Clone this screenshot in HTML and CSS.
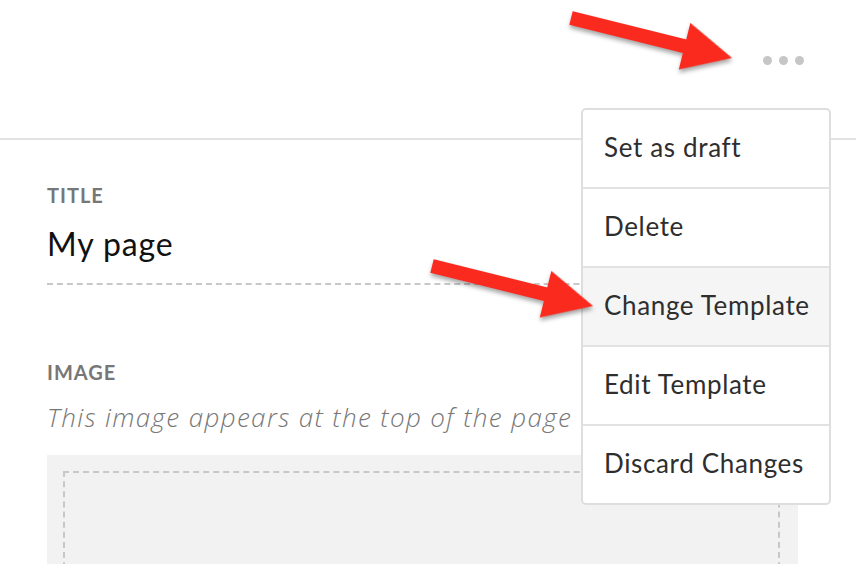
FILE: index.html
```html
<!DOCTYPE html>
<html>
<head>
<meta charset="utf-8">
<link rel="stylesheet" href="styles.css">
</head>
<body>
<div class="page">
  <header class="topbar">
    <div class="more" aria-label="More"><span></span><span></span><span></span></div>
  </header>
  <main class="form">
    <section class="field">
      <div class="label">TITLE</div>
      <div class="title-input">My page</div>
    </section>
    <section class="field image-field">
      <div class="label">IMAGE</div>
      <div class="hint">This image appears at the top of the page</div>
      <div class="dropzone"><div class="dropzone-inner"></div></div>
    </section>
  </main>
  <ul class="menu">
    <li class="menu-item">Set as draft</li>
    <li class="menu-item">Delete</li>
    <li class="menu-item active">Change Template</li>
    <li class="menu-item">Edit Template</li>
    <li class="menu-item">Discard Changes</li>
  </ul>
  <svg class="annotations" width="856" height="564" viewBox="0 0 856 564">
    <g class="arrow" transform="translate(571 18) rotate(13.95)">
      <polygon points="0,-7 117,-7 117,-24 166,0 117,24 117,7 0,7"/>
    </g>
    <g class="arrow" transform="translate(432 266) rotate(13.95)">
      <polygon points="0,-7 117,-7 117,-24 166,0 117,24 117,7 0,7"/>
    </g>
  </svg>
</div>
</body>
</html>
```
FILE: styles.css
```css
* { box-sizing: border-box; }
html, body { margin: 0; padding: 0; background: #fff; }
body { width: 856px; height: 564px; overflow: hidden; font-family: Lato, "Noto Sans", sans-serif; color: #222; }
.page { position: relative; width: 856px; height: 564px; overflow: hidden; }

.topbar {
  height: 140px;
  border-bottom: 2px solid #e2e2e2;
  display: flex;
  justify-content: flex-end;
  align-items: flex-start;
  padding: 56px 52px 0 0;
}
.more { display: flex; gap: 7px; }
.more span { width: 9px; height: 9px; border-radius: 50%; background: #c6c6c6; }

.form { padding: 43px 58px 0 47px; }
.field { display: flex; flex-direction: column; }
.label {
  font-size: 20px;
  font-weight: 700;
  color: #777;
  letter-spacing: 1px;
  line-height: 24px;
}
.title-input {
  margin-top: 17px;
  font-size: 32px;
  line-height: 40px;
  letter-spacing: 0.9px;
  color: #111;
  padding-bottom: 19px;
  border-bottom: 2px dashed #c8c8c8;
}
.image-field { margin-top: 75px; }
.hint {
  margin-top: 17px;
  font-family: "Open Sans", Lato, sans-serif;
  font-size: 26px;
  font-style: italic;
  font-weight: 300;
  letter-spacing: 1.37px;
  color: #777;
  line-height: 32px;
  white-space: nowrap;
}
.dropzone {
  margin-top: 22px;
  background: #f2f2f2;
  padding: 16px 18px 16px 16px;
  height: 200px;
}
.dropzone-inner { height: 100%; border: 2px dashed #c8c8c8; }

.menu {
  position: absolute;
  left: 581px;
  top: 108px;
  width: 250px;
  margin: 0;
  padding: 0;
  list-style: none;
  background: #fff;
  border: 2px solid #dedede;
  border-radius: 5px;
  overflow: hidden;
}
.menu-item {
  height: 79px;
  display: flex;
  align-items: center;
  padding: 0 0 3px 21px;
  font-size: 26px;
  letter-spacing: 0.65px;
  color: #2e2e2e;
  border-top: 2px solid #e2e2e2;
}
.menu-item:first-child { border-top: none; height: 77px; }
.menu-item.active { background: #f5f5f5; }

.annotations { position: absolute; left: 0; top: 0; pointer-events: none; }
.arrow polygon { fill: #fb2a1f; }
.arrow { filter: drop-shadow(1px 3px 2px rgba(0,0,0,0.35)); }
```
